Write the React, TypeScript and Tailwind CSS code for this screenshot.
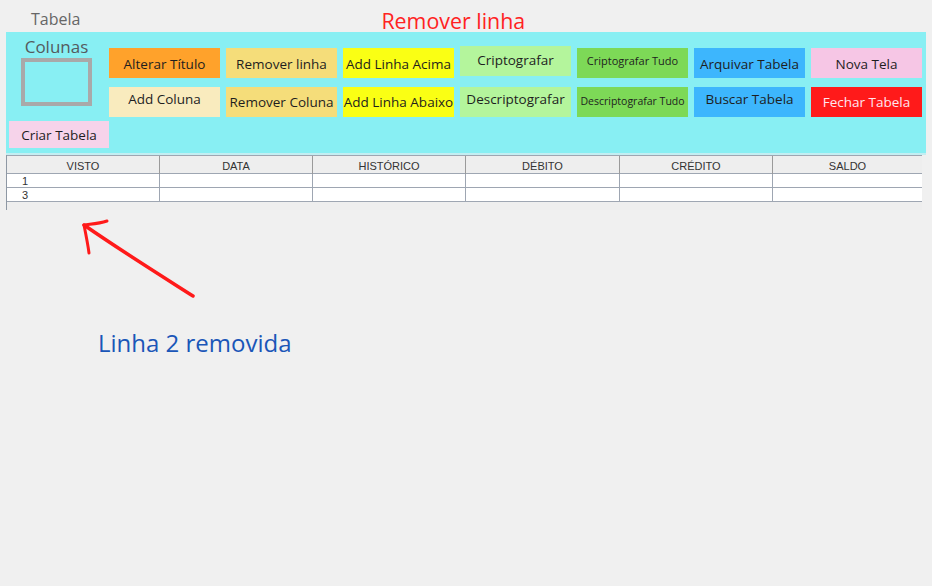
import React from "react";

const btnBase =
  "w-[111px] h-[30px] flex items-center justify-center whitespace-nowrap";

function Btn({ label, cls }: { label: string; cls: string }) {
  return <div className={`${btnBase} ${cls}`}>{label}</div>;
}

const cols = ["VISTO", "DATA", "HISTÓRICO", "DÉBITO", "CRÉDITO", "SALDO"];

export default function App() {
  return (
    <div
      className="relative w-[932px] h-[586px] bg-[#f0f0f0] overflow-hidden"
      style={{ fontFamily: "'Open Sans', 'Noto Sans', sans-serif" }}
    >
      {/* title row */}
      <div className="h-[32px] flex items-start">
        <div className="ml-[31px] mt-[9px] text-[16px] leading-[20px] text-[#666666]">
          Tabela
        </div>
        <div className="ml-[301px] mt-[7px] text-[21.4px] leading-[28px] text-[#ff2222]">
          Remover linha
        </div>
      </div>

      {/* panel */}
      <div className="ml-[6px] w-[920px] h-[121px] bg-[#88eff3] flex flex-col">
        <div className="flex h-[85px]">
          <div className="w-[103px] pl-[15px] pt-[4px] flex flex-col">
            <div className="w-[71px] flex justify-center text-[17px] leading-[22px] text-[#555a5e]">
              Colunas
            </div>
            <div className="w-[71px] h-[48px] border-[4px] border-[#a9a9a9]" />
          </div>
          <div className="pt-[16px] grid grid-cols-[111px_111px_111px_111px_111px_111px_111px] grid-rows-[30px_30px] gap-x-[6px] gap-y-[9px] text-[13.5px] text-[#1e1e1e]">
            <Btn label="Alterar Título" cls="bg-[#ffa22b] pt-[2px]" />
            <Btn label="Remover linha" cls="bg-[#f5dd7a] pt-[2px]" />
            <Btn label="Add Linha Acima" cls="bg-[#faff14] pt-[2px]" />
            <div className={`${btnBase} bg-[#b4f59c] -mt-[2px] pb-[1px]`}>Criptografar</div>
            <div className={`${btnBase} bg-[#7dd957] text-[11px] pb-[4px]`}>Criptografar Tudo</div>
            <Btn label="Arquivar Tabela" cls="bg-[#3db6fd] pt-[2px]" />
            <Btn label="Nova Tela" cls="bg-[#f6c6e5] pt-[2px]" />
            <div className={`${btnBase} bg-[#f9ebbe] pb-[5px]`}>Add Coluna</div>
            <Btn label="Remover Coluna" cls="bg-[#f5dd7a]" />
            <Btn label="Add Linha Abaixo" cls="bg-[#faff14]" />
            <div className={`${btnBase} bg-[#b4f59c] pb-[5px]`}>Descriptografar</div>
            <div className={`${btnBase} bg-[#7dd957] text-[10.5px]`}>Descriptografar Tudo</div>
            <div className={`${btnBase} bg-[#3db6fd] pb-[5px]`}>Buscar Tabela</div>
            <div className={`${btnBase} bg-[#ff1a1a] text-[#ffe6ef]`}>Fechar Tabela</div>
          </div>
        </div>
        <div className="ml-[3px] mt-[4px] w-[100px] h-[27px] pt-[2px] bg-[#f6d3ea] flex items-center justify-center text-[13.5px] text-[#1e1e1e]">
          Criar Tabela
        </div>
      </div>
      <div className="ml-[6px] w-[920px] h-[2px] bg-[#c4eef2]" />

      {/* table */}
      <div
        className="ml-[6px] w-[916px] border-l border-[#8e98a4] text-[11px] text-[#333333]"
        style={{ fontFamily: "'Liberation Sans', Arial, sans-serif" }}
      >
        <div className="grid grid-cols-[153px_153px_153px_154px_153px_149px] h-[19px] bg-[#eeeeee] border-t border-b border-[#9ea6b2]">
          {cols.map((c, i) => (
            <div
              key={c}
              className={`flex items-center justify-center pt-[2px] ${i < 5 ? "border-r border-[#9a9a9a]" : ""}`}
            >
              {c}
            </div>
          ))}
        </div>
        {["1", "3"].map((r) => (
          <div
            key={r}
            className="grid grid-cols-[153px_153px_153px_154px_153px_149px] h-[14px] bg-white border-b border-[#9ea6b2]"
          >
            {cols.map((c, i) => (
              <div
                key={c}
                className={`flex items-center leading-[13px] pt-[1px] ${i === 0 ? "pl-[15px]" : ""} ${i < 5 ? "border-r border-[#9ea6b2]" : ""}`}
              >
                {i === 0 ? r : ""}
              </div>
            ))}
          </div>
        ))}
        <div className="h-[8px] bg-[#eeeeee]" />
      </div>

      {/* annotation text */}
      <div className="ml-[98px] mt-[117px] text-[24px] leading-[32px] text-[#1a56b8]">
        Linha 2 removida
      </div>

      {/* annotation arrow */}
      <svg
        className="absolute left-0 top-0 pointer-events-none"
        width="932"
        height="586"
        viewBox="0 0 932 586"
      >
        <path
          d="M193 296 C 160 275, 120 250, 84 225"
          fill="none"
          stroke="#ff1a1a"
          strokeWidth="3.5"
          strokeLinecap="round"
        />
        <path
          d="M107 221 C 98 224, 90 224, 84 225 C 86 235, 88 245, 89 253"
          fill="none"
          stroke="#ff1a1a"
          strokeWidth="3"
          strokeLinecap="round"
          strokeLinejoin="round"
        />
      </svg>
    </div>
  );
}
